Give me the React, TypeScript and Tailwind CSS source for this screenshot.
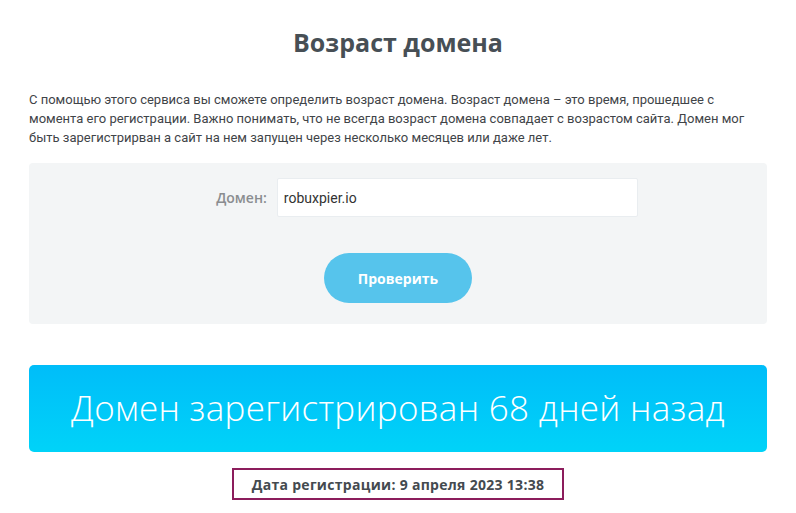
import React from "react";

const App = () => {
  return (
    <div className="min-h-[513px] w-full bg-white" style={{ fontFamily: '"Open Sans", Roboto, sans-serif' }}>
      <div className="mx-auto w-[738px] pt-[27px]">
        {/* Header */}
        <h1 className="text-center text-[25px] font-bold leading-[30px] text-[#474f55]">
          Возраст домена
        </h1>

        <p className="mt-[33px] font-['Roboto',sans-serif] text-[13px] leading-[19px] text-[#3f4448]">
          С помощью этого сервиса вы сможете определить возраст домена. Возраст домена – это время, прошедшее с
          момента его регистрации. Важно понимать, что не всегда возраст домена совпадает с возрастом сайта. Домен мог
          быть зарегистрирван а сайт на нем запущен через несколько месяцев или даже лет.
        </p>

        {/* Form */}
        <div className="mt-[16px] flex h-[161px] flex-col items-center rounded-[4px] bg-[#f3f5f6] pt-[15px]">
          <div className="ml-[58px] flex items-center">
            <label className="mr-[10px] text-[14px] font-semibold text-[#8a8d90]">Домен:</label>
            <input
              defaultValue="robuxpier.io"
              className="h-[39px] w-[361px] rounded-[2px] border border-[#e9edf0] bg-white px-[6px] font-['Roboto',sans-serif] text-[14px] text-[#333] outline-none"
            />
          </div>
          <button className="mt-[36px] h-[50px] w-[148px] rounded-full bg-[#56c4ec] text-[14px] font-bold text-white">
            Проверить
          </button>
        </div>

        {/* Result */}
        <div className="mt-[41px] flex h-[87px] items-center justify-center rounded-[5px] bg-gradient-to-b from-[#00bdf9] to-[#00d3f8]">
          <span className="text-[35px] font-light tracking-[0.3px] text-white">
            Домен зарегистрирован 68 дней назад
          </span>
        </div>

        <div className="mt-[16px] flex justify-center">
          <div className="flex h-[32px] w-[332px] items-center justify-center border-2 border-[#8c1d5c] text-[14px] font-bold tracking-[0.3px] text-[#444a4f]">
            Дата регистрации: 9 апреля 2023 13:38
          </div>
        </div>
      </div>
    </div>
  );
};

export default App;
